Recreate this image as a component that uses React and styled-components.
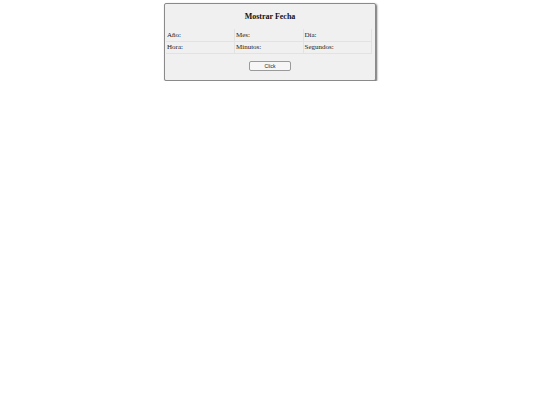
import React from 'react';
import styled, { createGlobalStyle } from 'styled-components';

const GlobalStyle = createGlobalStyle`
    html, body {
        margin: 0;
        padding: 0;
        background: #fff;
    }
    body {
        font-family: "Liberation Serif", "Times New Roman", serif;
    }
`;

const Page = styled.div`
    display: flex;
    justify-content: center;
    padding-top: 3px;
`;

const Card = styled.div`
    width: 212px;
    box-sizing: border-box;
    background-color: #f0f0f0;
    border: 1px solid #8a8a8a;
    border-radius: 2px;
    box-shadow: 1px 1px 2px rgba(0, 0, 0, 0.6);
    padding: 8px 0 9px;
    display: flex;
    flex-direction: column;
    align-items: center;
`;

const Title = styled.h3`
    margin: 0 0 7px;
    font-size: 8px;
    line-height: 10px;
    font-weight: 700;
    color: #111;
`;

const Table = styled.table`
    align-self: flex-start;
    width: 206px;
    border-collapse: collapse;
    margin-left: 1px;
`;

const Cell = styled.td`
    width: 33.33%;
    height: 12px;
    padding: 1px 0 0 1px;
    box-sizing: border-box;
    font-size: 7px;
    line-height: 9px;
    color: #222;
    border: 1px solid #e2e2e2;
    border-left: ${props => (props.first ? 'none' : '1px solid #e2e2e2')};
    border-top: ${props => (props.top ? 'none' : '1px solid #e2e2e2')};
    vertical-align: middle;
`;

const Button = styled.button`
    margin-top: 7px;
    width: 42px;
    height: 10px;
    padding: 0;
    font-family: "Liberation Sans", Arial, sans-serif;
    font-size: 5px;
    color: #222;
    background-color: #f6f6f6;
    border: 1px solid #9a9a9a;
    border-radius: 2px;
    cursor: pointer;
`;

const rows = [
    ['Año:', 'Mes:', 'Día:'],
    ['Hora:', 'Minutos:', 'Segundos:'],
];

export default function App() {
    return (
        <>
            <GlobalStyle />
            <Page>
                <Card>
                    <Title>Mostrar Fecha</Title>
                    <Table>
                        <tbody>
                            {rows.map((row, i) => (
                                <tr key={i}>
                                    {row.map((label, j) => (
                                        <Cell key={label} first={j === 0} top={i === 0}>
                                            {label}
                                        </Cell>
                                    ))}
                                </tr>
                            ))}
                        </tbody>
                    </Table>
                    <Button>Click</Button>
                </Card>
            </Page>
        </>
    );
}
